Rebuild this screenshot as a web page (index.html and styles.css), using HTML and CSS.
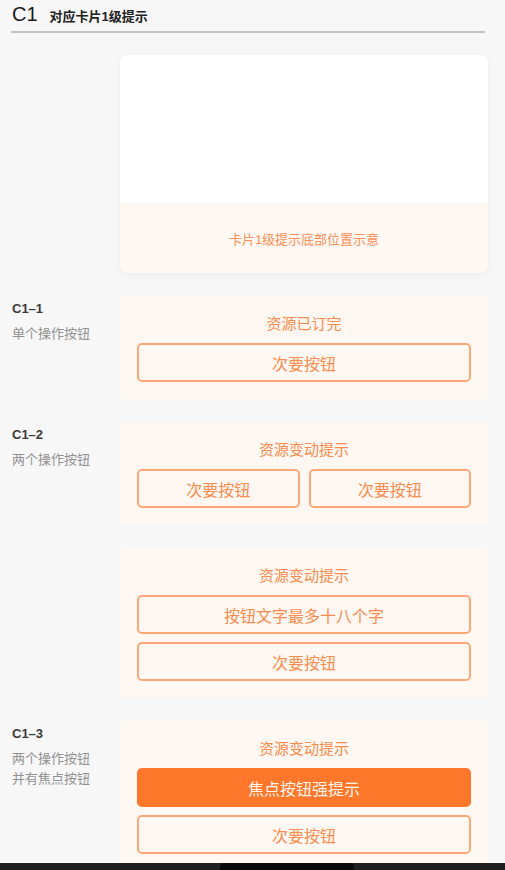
FILE: index.html
```html
<!DOCTYPE html>
<html lang="zh-CN">
<head>
<meta charset="utf-8">
<title>C1 对应卡片1级提示</title>
<link rel="stylesheet" href="styles.css">
</head>
<body>
<header class="header">
  <span class="h-code">C1</span>
  <span class="h-title">对应卡片1级提示</span>
</header>
<main class="main">
  <section class="row">
    <div class="label"></div>
    <div class="demo">
      <div class="demo-top"></div>
      <div class="demo-bottom">卡片1级提示底部位置示意</div>
    </div>
  </section>

  <section class="row">
    <div class="label">
      <div class="code">C1–1</div>
      <div class="desc">单个操作按钮</div>
    </div>
    <div class="card">
      <div class="card-title">资源已订完</div>
      <div class="btn">次要按钮</div>
    </div>
  </section>

  <section class="row">
    <div class="label">
      <div class="code">C1–2</div>
      <div class="desc">两个操作按钮</div>
    </div>
    <div class="card">
      <div class="card-title">资源变动提示</div>
      <div class="btn-row">
        <div class="btn">次要按钮</div>
        <div class="btn">次要按钮</div>
      </div>
    </div>
  </section>

  <section class="row">
    <div class="label"></div>
    <div class="card">
      <div class="card-title">资源变动提示</div>
      <div class="btn">按钮文字最多十八个字</div>
      <div class="btn">次要按钮</div>
    </div>
  </section>

  <section class="row">
    <div class="label">
      <div class="code">C1–3</div>
      <div class="desc">两个操作按钮<br>并有焦点按钮</div>
    </div>
    <div class="card">
      <div class="card-title">资源变动提示</div>
      <div class="btn btn-primary">焦点按钮强提示</div>
      <div class="btn">次要按钮</div>
    </div>
  </section>
</main>
<div class="home-bar"><span class="home-pill"></span></div>
</body>
</html>
```

FILE: styles.css
```css
html, body {
  margin: 0;
  padding: 0;
}

body {
  background: #f7f7f7;
  font-family: "Liberation Sans", "Noto Sans CJK SC", sans-serif;
  color: #222;
}

.header {
  display: flex;
  align-items: baseline;
  margin: 0 20px 0 11px;
  padding-top: 1px;
  height: 30px;
  border-bottom: 2px solid #c2c2c2;
}

.h-code {
  font-size: 20px;
  line-height: 26px;
  color: #1a1a1a;
  margin-left: 1px;
}

.h-title {
  font-size: 13px;
  font-weight: 700;
  margin-left: 12px;
  color: #222;
}

.main {
  display: flex;
  flex-direction: column;
  gap: 23px;
  padding: 22px 17px 40px 12px;
}

.row {
  display: grid;
  grid-template-columns: 108px 1fr;
}

.label {
  padding-top: 3px;
}

.code {
  font-size: 13px;
  font-weight: 700;
  line-height: 20px;
  color: #3a3a3a;
}

.desc {
  font-size: 13px;
  line-height: 20px;
  color: #919191;
  margin-top: 5px;
}

.demo {
  background: #fff;
  border-radius: 8px;
  box-shadow: 0 2px 10px rgba(0, 0, 0, 0.05);
  overflow: hidden;
}

.demo-top {
  height: 148px;
}

.demo-bottom {
  height: 70px;
  background: #fff7f1;
  display: flex;
  align-items: center;
  justify-content: center;
  font-size: 13px;
  color: #f98f58;
}

.card {
  background: #fff7f2;
  border-radius: 6px;
  padding: 17px;
  display: flex;
  flex-direction: column;
  gap: 8px;
}

.card-title {
  text-align: center;
  font-size: 15px;
  line-height: 22px;
  color: #f98b4d;
}

.btn {
  height: 39px;
  box-sizing: border-box;
  border: 2px solid #ffa877;
  border-radius: 5px;
  display: flex;
  align-items: center;
  justify-content: center;
  font-size: 16px;
  color: #f98b4d;
}

.btn-row {
  display: flex;
  gap: 9px;
}

.btn-row .btn {
  flex: 1;
}

.btn-primary {
  background: #ff772b;
  border-color: #ff772b;
  color: #fff5ec;
}

.home-bar {
  position: fixed;
  left: 0;
  right: 0;
  bottom: 0;
  height: 7px;
  background: #1f1f1f;
  display: flex;
  align-items: flex-end;
}

.home-pill {
  margin-left: 220px;
  width: 134px;
  height: 7px;
  border-radius: 4px 4px 0 0;
  background: #0a0a0a;
}
```
